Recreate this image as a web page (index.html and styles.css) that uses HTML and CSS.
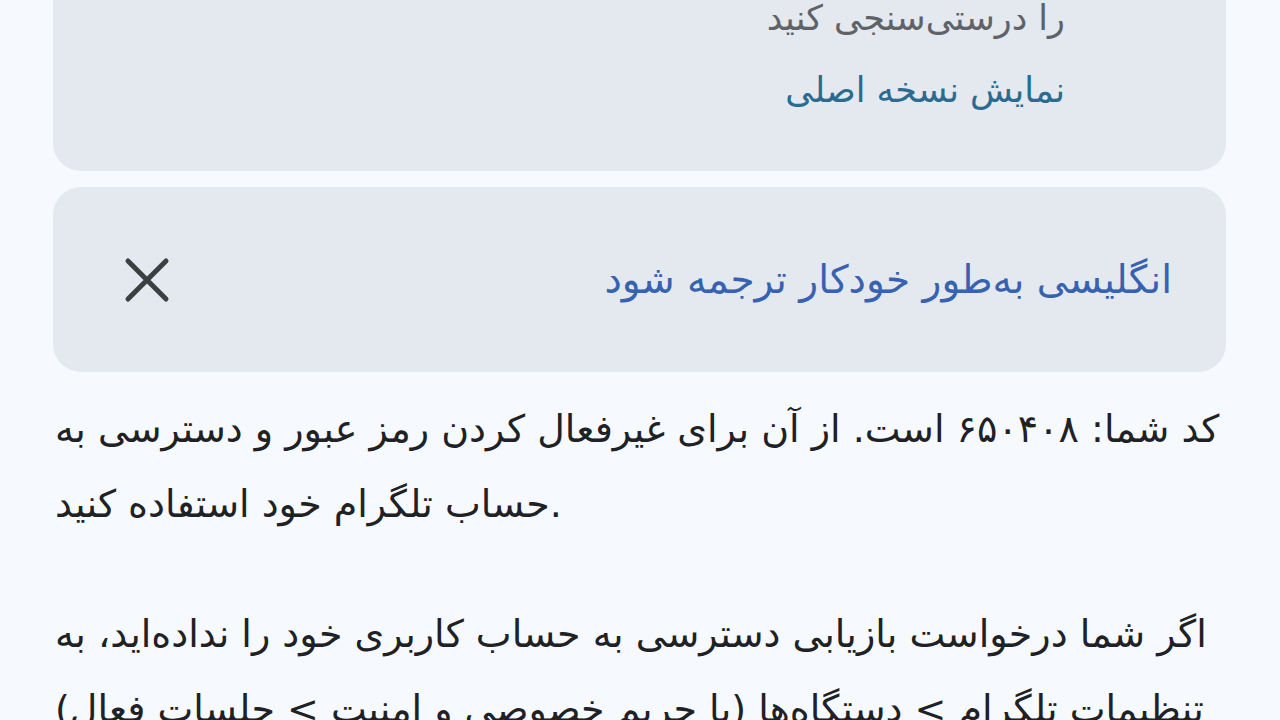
FILE: index.html
```html
<!DOCTYPE html>
<html lang="fa">
<head>
<meta charset="utf-8">
<title>Telegram</title>
<link rel="stylesheet" href="styles.css">
</head>
<body>
<div class="page">
  <div class="card notice" dir="rtl">
    <div class="notice-text">
      <div class="muted">را درستی‌سنجی کنید</div>
      <div class="link">نمایش نسخه اصلی</div>
    </div>
  </div>
  <div class="card translate" dir="rtl">
    <div class="translate-text">انگلیسی به‌طور خودکار ترجمه شود</div>
    <div class="close" aria-label="close">
      <svg width="48" height="48" viewBox="0 0 48 48"><path d="M5 5 L43 43 M43 5 L5 43" stroke="#3c4043" stroke-width="5" stroke-linecap="round" fill="none"/></svg>
    </div>
  </div>
  <div class="message">
    <p>کد شما: ۶۵۰۴۰۸ است. از آن برای غیرفعال کردن رمز عبور و دسترسی به حساب تلگرام خود استفاده کنید.</p>
    <p>اگر شما درخواست بازیابی دسترسی به حساب کاربری خود را نداده‌اید، به تنظیمات تلگرام &gt; دستگاه‌ها (یا حریم خصوصی و امنیت &gt; جلسات فعال) بروید و نشست‌های ناشناس را پایان دهید.</p>
  </div>
</div>
</body>
</html>
```
FILE: styles.css
```css
html, body {
  margin: 0;
  padding: 0;
  background: #f6f9fd;
  overflow: hidden;
}
body {
  font-family: "DejaVu Sans", "Noto Sans", sans-serif;
  color: #202124;
}
.page {
  padding: 0 54px 0 53px;
}
.card {
  background: #e4e8ef;
  border-radius: 28px;
}
.notice {
  margin-top: -60px;
  padding: 42px 161px 45px 40px;
}
.notice-text {
  font-size: 35px;
  line-height: 72px;
}
.muted {
  color: #5f6368;
}
.link {
  color: #2a6b8f;
}
.translate {
  margin-top: 16px;
  height: 185px;
  display: flex;
  align-items: center;
  justify-content: space-between;
  padding: 0 54px 0 70px;
}
.translate-text {
  font-size: 39px;
  color: #3762b0;
}
.close {
  width: 48px;
  height: 48px;
  display: flex;
}
.message {
  padding: 20px 2px 0 2px;
  font-size: 38px;
  line-height: 75px;
  color: #202124;
}
.message p {
  margin: 0 0 55px 0;
}
```
